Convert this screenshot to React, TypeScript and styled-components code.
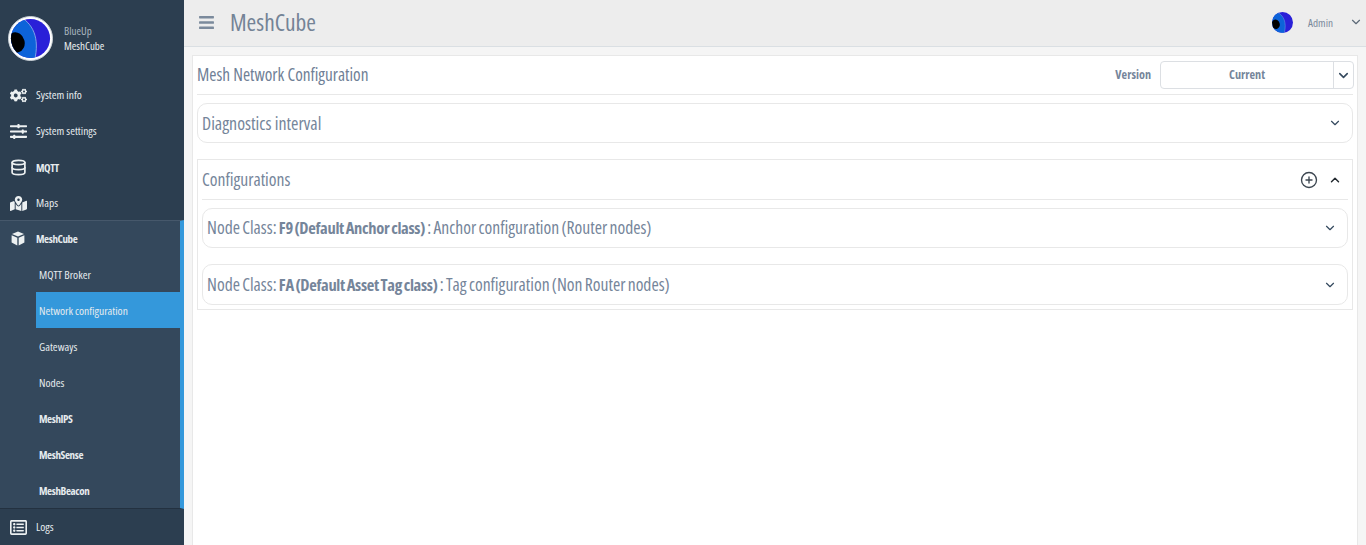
import * as React from 'react';
import styled, { createGlobalStyle } from 'styled-components';
import {
  FaBars,
  FaCogs,
  FaMapMarkedAlt,
  FaRegListAlt,
  FaSlidersH,
} from 'react-icons/fa';
import { ChevronDown, ChevronUp, CirclePlus, Database } from 'lucide-react';

const FONT = `"Open Sans", "Liberation Sans", sans-serif`;

const GlobalStyle = createGlobalStyle`
  html, body {
    margin: 0;
    height: 100%;
    overflow: hidden;
    background: #f5f5f5;
    font-family: ${FONT};
    font-stretch: 75%;
  }
  * { box-sizing: border-box; }
`;

const Layout = styled.div`
  display: flex;
  height: 545px;
`;

const Sidebar = styled.aside`
  width: 184px;
  flex: none;
  display: flex;
  flex-direction: column;
  background: #2c3e50;
  color: #ecf0f1;
`;

const Brand = styled.div`
  height: 77px;
  display: flex;
  align-items: center;
  padding: 0 0 0 8px;
  gap: 11px;
`;

const BrandText = styled.div`
  display: flex;
  flex-direction: column;
  font-size: 11px;
  line-height: 15px;
  padding-bottom: 2px;
`;

const BrandOwner = styled.span`
  color: #a9b5bf;
`;

const NavItem = styled.div<{ $bold?: boolean }>`
  height: 36px;
  display: flex;
  align-items: center;
  font-size: ${({ $bold }) => ($bold ? '11px' : '11.5px')};
  font-weight: ${({ $bold }) => ($bold ? 700 : 400)};
  letter-spacing: ${({ $bold }) => ($bold ? '-0.4px' : '0')};
  color: #e6ebee;
`;

const NavLabel = styled.span<{ $bold?: boolean }>`
  padding-bottom: ${({ $bold }) => ($bold ? 0 : 2)}px;
`;

const NavIcon = styled.span`
  width: 36px;
  flex: none;
  display: flex;
  justify-content: center;
  color: #ecf0f1;
`;

const Section = styled.div`
  display: flex;
  flex-direction: column;
  margin-top: -1px;
  height: 289px;
  background: #34485c;
  border-top: 1px solid #46586b;
  border-bottom: 1px solid #233140;
  border-right: 4px solid #3498db;
`;

const SubItem = styled.div<{ $active?: boolean; $bold?: boolean }>`
  height: 36px;
  flex: none;
  margin-left: 36px;
  padding-left: 3px;
  display: flex;
  align-items: center;
  font-size: ${({ $bold }) => ($bold ? '11px' : '11.5px')};
  font-weight: ${({ $bold }) => ($bold ? 700 : 400)};
  letter-spacing: ${({ $bold }) => ($bold ? '-0.4px' : '0')};
  color: #e6ebee;
  background: ${({ $active }) => ($active ? '#3498db' : 'transparent')};
`;

const Main = styled.main`
  flex: 1;
  min-width: 0;
  display: flex;
  flex-direction: column;
`;

const TopBar = styled.header`
  height: 47px;
  flex: none;
  display: flex;
  align-items: center;
  background: #ededed;
  border-bottom: 1px solid #dadfe3;
  padding: 0 0 2px 14px;
  color: #7b8a9c;
`;

const Title = styled.h1`
  margin: 0 0 0 15px;
  font-size: 23.4px;
  font-weight: 400;
  flex: 1;
  color: #748396;
`;

const UserName = styled.span`
  font-size: 11.2px;
  margin: 0 16px 0 15px;
  color: #7b8a9c;
`;

const TopCaret = styled(ChevronDown)`
  margin-right: 3px;
  color: #5d6a78;
`;

const Content = styled.div`
  flex: 1;
  min-height: 0;
  padding: 8px 8px 0 8px;
`;

const Card = styled.section`
  height: 100%;
  background: #fff;
  border: 1px solid #e8e8e8;
  border-bottom: none;
  padding: 0 4px;
`;

const CardHeader = styled.div`
  height: 39px;
  display: flex;
  align-items: center;
  justify-content: space-between;
  border-bottom: 1px solid #e8e8e8;
`;

const CardTitle = styled.h2`
  margin: 0;
  padding-bottom: 2px;
  font-size: 17.3px;
  font-weight: 500;
  color: #6f8096;
`;

const VersionBox = styled.div`
  display: flex;
  align-items: center;
  margin-right: -1px;
`;

const VersionLabel = styled.span`
  font-size: 12.2px;
  font-weight: 700;
  color: #75859a;
  margin-right: 9px;
  padding-bottom: 2px;
`;

const Select = styled.div`
  width: 194px;
  height: 28px;
  display: flex;
  align-items: center;
  border: 1px solid #dcdfe3;
  border-radius: 4px;
`;

const SelectValue = styled.span`
  flex: 1;
  text-align: center;
  font-size: 12.2px;
  font-weight: 700;
  color: #75859a;
  padding-bottom: 2px;
`;

const SelectCaret = styled.span`
  width: 20px;
  height: 100%;
  display: flex;
  align-items: center;
  justify-content: center;
  border-left: 1px solid #dcdfe3;
  color: #34495e;
`;

const Accordion = styled.div<{ $mt: number; $h: number; $title?: boolean }>`
  margin-top: ${({ $mt }) => $mt}px;
  height: ${({ $h }) => $h}px;
  display: flex;
  align-items: center;
  justify-content: space-between;
  border: 1px solid #e8e8e8;
  border-radius: 10px;
  padding: 0 10px 0 4px;
  font-size: ${({ $title }) => ($title ? '17.9px' : '17.6px')};
  font-weight: ${({ $title }) => ($title ? 500 : 400)};
  word-spacing: ${({ $title }) => ($title ? '0' : '-1px')};
  color: #75859a;
  strong {
    font-size: 16.5px;
    font-weight: 700;
    letter-spacing: -0.3px;
  }
`;

const AccordionText = styled.span<{ $title?: boolean }>`
  padding-bottom: ${({ $title }) => ($title ? 1 : 2)}px;
`;

const Group = styled.div`
  margin-top: 16px;
  border: 1px solid #e8e8e8;
  padding: 0 4px 4px;
  height: 151px;
`;

const GroupHeader = styled.div`
  height: 40px;
  display: flex;
  align-items: center;
  justify-content: space-between;
  border-bottom: 1px solid #e8e8e8;
  padding-right: 6px;
`;

const GroupTitle = styled.span`
  font-size: 17.6px;
  font-weight: 500;
  color: #75859a;
  padding-bottom: 1px;
`;

const GroupActions = styled.div`
  display: flex;
  align-items: center;
  gap: 10px;
  color: #3c4650;
`;

const Logo = ({ size, ring }: { size: number; ring: boolean }) => (
  <svg width={size} height={size} viewBox="0 0 46 46">
    <defs>
      <clipPath id={`logo-${size}`}>
        <circle cx="23" cy="23" r={ring ? 20 : 23} />
      </clipPath>
    </defs>
    {ring && <circle cx="23" cy="23" r="22.5" fill="#fff" stroke="#c9d0d6" />}
    <g clipPath={`url(#logo-${size})`}>
      <rect width="46" height="46" fill="#2a20d8" />
      <path d="M11 0 C25 7 33 22 27 46 H0 V0 Z" fill="#0d63d9" stroke="#9db8ee" strokeWidth="0.8" />
      <ellipse cx="8" cy="27" rx="9" ry="10.5" fill="#000" transform="rotate(-15 8 27)" />
    </g>
  </svg>
);

const CubeIcon = () => (
  <svg width="14" height="15" viewBox="0 0 14 15" fill="#ecf0f1">
    <path d="M7 0.5 L13 3 L7 5.6 L1 3 Z" />
    <path d="M0.6 4.2 L6.3 6.7 V14.4 L0.6 11.6 Z" />
    <path d="M13.4 4.2 L7.7 6.7 V14.4 L13.4 11.6 Z" />
  </svg>
);

const menu = [
  { label: 'System info', icon: <FaCogs size={17} /> },
  { label: 'System settings', icon: <FaSlidersH size={17} /> },
  { label: 'MQTT', icon: <Database size={17} strokeWidth={2.4} />, bold: true },
  { label: 'Maps', icon: <FaMapMarkedAlt size={17} /> },
];

const subMenu = [
  { label: 'MQTT Broker' },
  { label: 'Network configuration', active: true },
  { label: 'Gateways' },
  { label: 'Nodes' },
  { label: 'MeshIPS', bold: true },
  { label: 'MeshSense', bold: true },
  { label: 'MeshBeacon', bold: true },
];

export default function App() {
  return (
    <Layout>
      <GlobalStyle />
      <Sidebar>
        <Brand>
          <Logo size={45} ring />
          <BrandText>
            <BrandOwner>BlueUp</BrandOwner>
            <span>MeshCube</span>
          </BrandText>
        </Brand>
        {menu.map((item) => (
          <NavItem key={item.label} $bold={item.bold}>
            <NavIcon>{item.icon}</NavIcon>
            <NavLabel $bold={item.bold}>{item.label}</NavLabel>
          </NavItem>
        ))}
        <Section>
          <NavItem $bold>
            <NavIcon>
              <CubeIcon />
            </NavIcon>
            <NavLabel $bold>MeshCube</NavLabel>
          </NavItem>
          {subMenu.map((item) => (
            <SubItem key={item.label} $active={item.active} $bold={item.bold}>
              {item.label}
            </SubItem>
          ))}
        </Section>
        <NavItem>
          <NavIcon>
            <FaRegListAlt size={17} />
          </NavIcon>
          <NavLabel>Logs</NavLabel>
        </NavItem>
      </Sidebar>
      <Main>
        <TopBar>
          <FaBars size={17} />
          <Title>MeshCube</Title>
          <Logo size={21} ring={false} />
          <UserName>Admin</UserName>
          <TopCaret size={14} />
        </TopBar>
        <Content>
          <Card>
            <CardHeader>
              <CardTitle>Mesh Network Configuration</CardTitle>
              <VersionBox>
                <VersionLabel>Version</VersionLabel>
                <Select>
                  <SelectValue>Current</SelectValue>
                  <SelectCaret>
                    <ChevronDown size={15} strokeWidth={2.5} />
                  </SelectCaret>
                </Select>
              </VersionBox>
            </CardHeader>
            <Accordion $mt={8} $h={40} $title>
              <AccordionText $title>Diagnostics interval</AccordionText>
              <ChevronDown size={14} color="#34495e" />
            </Accordion>
            <Group>
              <GroupHeader>
                <GroupTitle>Configurations</GroupTitle>
                <GroupActions>
                  <CirclePlus size={18} strokeWidth={1.8} />
                  <ChevronUp size={14} strokeWidth={2.5} color="#22292f" />
                </GroupActions>
              </GroupHeader>
              <Accordion $mt={8} $h={40}>
                <AccordionText>
                  Node Class: <strong>F9 (Default Anchor class)</strong> : Anchor
                  configuration (Router nodes)
                </AccordionText>
                <ChevronDown size={14} color="#34495e" />
              </Accordion>
              <Accordion $mt={16} $h={41}>
                <AccordionText>
                  Node Class: <strong>FA (Default Asset Tag class)</strong> : Tag
                  configuration (Non Router nodes)
                </AccordionText>
                <ChevronDown size={14} color="#34495e" />
              </Accordion>
            </Group>
          </Card>
        </Content>
      </Main>
    </Layout>
  );
}
